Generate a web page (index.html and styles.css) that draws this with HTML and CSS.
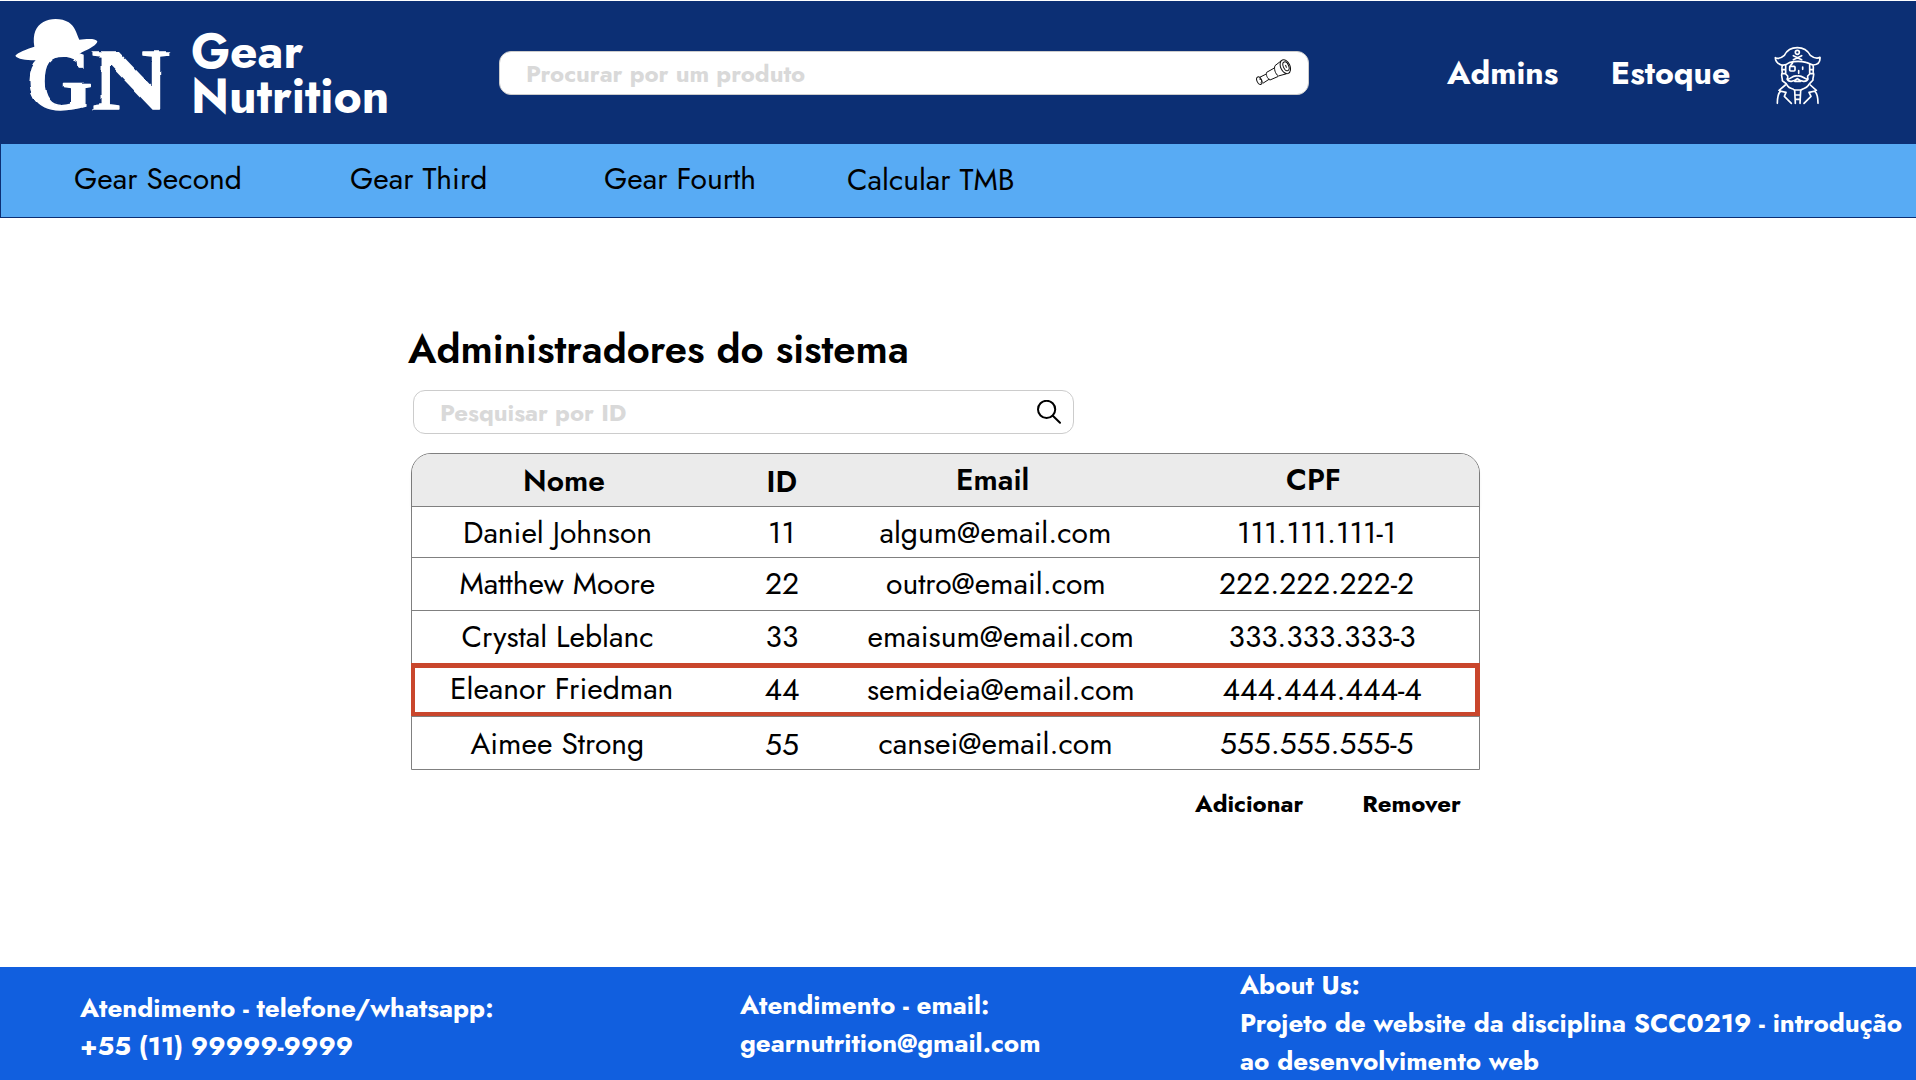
FILE: index.html
```html
<!DOCTYPE html>
<html lang="pt-BR">
<head>
<meta charset="utf-8">
<title>Gear Nutrition - Administradores</title>
<link rel="stylesheet" href="styles.css">
</head>
<body>
<header class="topbar">
  <a class="brand">
    <svg class="brand-mark" viewBox="0 0 510 312" width="170" height="104" fill="#fff">
      <defs>
        <filter id="worn" x="-5%" y="-5%" width="110%" height="110%">
          <feTurbulence type="fractalNoise" baseFrequency="0.03" numOctaves="1" seed="4"/>
          <feDisplacementMap in="SourceGraphic" scale="9" xChannelSelector="R" yChannelSelector="G"/>
        </filter>
      </defs>
      <path d="M22 131C30 121 54 112 79 104C73 66 84 42 106 30C127 17 162 18 182 31C201 43 205 64 214 83C232 82 262 78 268 88C268 98 247 110 222 121C208 130 196 136 178 135C155 134 130 136 110 143C78 147 30 145 22 131Z"/>
      <g filter="url(#worn)" class="brand-letters">
        <text x="54" y="292" textLength="200" lengthAdjust="spacingAndGlyphs">G</text>
        <text x="250" y="291" textLength="236" lengthAdjust="spacingAndGlyphs">N</text>
      </g>
    </svg>
    <span class="brand-name">Gear<br>Nutrition</span>
  </a>
  <div class="search search-products">
    <span>Procurar por um produto</span>
    <svg viewBox="0 0 108 84" width="36" height="28" fill="none" stroke="#111" stroke-width="3" stroke-linecap="round" stroke-linejoin="round">
      <ellipse cx="91" cy="23" rx="14" ry="22" transform="rotate(-24 91 23)"/>
      <ellipse cx="93" cy="22" rx="8" ry="14" transform="rotate(-24 93 22)"/>
      <path d="M78 6L60 20C56 29 61 45 70 51L92 45M58 27L35 40C32 47 37 59 45 63L68 53M32 46L16 54M42 61L25 72M92 19l2 6"/>
      <ellipse cx="13" cy="65" rx="7" ry="12" transform="rotate(-24 13 65)"/>
      <path d="M14 60C20 60 22 68 18 71"/>
    </svg>
  </div>
  <nav class="admin-links">
    <a>Admins</a>
    <a>Estoque</a>
    <svg viewBox="72 48 143 177" width="47.7" height="59" fill="none" stroke="#fff" stroke-width="5" stroke-linecap="round" stroke-linejoin="round">
      <path d="M76 83C84 88 95 83 103 76C112 58 125 53 142 53C160 53 172 60 181 76C190 83 200 88 210 82C211 96 203 104 190 105C182 104 176 98 168 97C150 93 135 93 118 98C110 104 100 107 92 104C82 100 76 92 76 83Z"/>
      <circle cx="142" cy="67" r="6"/>
      <path d="M130 77L155 89M155 77L130 89"/>
      <path d="M97 107C93 116 98 122 96 129C92 138 98 144 97 152C104 156 109 160 113 168C119 177 127 174 133 180H153C160 174 168 176 174 167C179 160 184 156 189 150C187 142 194 136 190 129C188 121 192 114 189 107"/>
      <path d="M107 106V132L113 138V146M179 104V132L173 138V146M97 119H107M97 131H107M179 119H189M179 131H189M128 98L119 110"/>
      <rect x="119" y="109" width="16" height="14" rx="3"/>
      <path d="M158 111V118M146 122V130M111 147C120 151 126 134 142 138C158 134 165 151 174 147C170 157 153 156 142 146C131 156 115 157 111 147ZM134 154H152"/>
      <path d="M82 220C82 202 84 190 92 183L87 181L106 165M90 183L108 187L103 199L124 220M204 220C204 202 201 190 194 183L199 181L181 165M196 183L177 187L183 199L162 220M134 181L136 220M152 181L150 220M135 195H151M135 208H151"/>
    </svg>
  </nav>
</header>
<nav class="categories">
  <a>Gear Second</a>
  <a>Gear Third</a>
  <a>Gear Fourth</a>
  <a class="tmb">Calcular TMB</a>
</nav>
<main class="content">
  <h1>Administradores do sistema</h1>
  <div class="search search-id">
    <span>Pesquisar por ID</span>
    <svg viewBox="0 0 24 24" width="24" height="24" fill="none" stroke="#000" stroke-width="2" stroke-linecap="round">
      <circle cx="9.6" cy="9.4" r="8.6"/>
      <path d="M15.8 15.8L23 22.8"/>
    </svg>
  </div>
  <div class="table">
    <div class="row head"><b>Nome</b><b>ID</b><b>Email</b><b>CPF</b></div>
    <div class="row daniel"><span>Daniel Johnson</span><span>11</span><span>algum@email.com</span><span>111.111.111-1</span></div>
    <div class="row matthew"><span>Matthew Moore</span><span>22</span><span>outro@email.com</span><span>222.222.222-2</span></div>
    <div class="row crystal"><span>Crystal Leblanc</span><span>33</span><span>emaisum@email.com</span><span>333.333.333-3</span></div>
    <div class="row eleanor selected"><span>Eleanor Friedman</span><span>44</span><span>semideia@email.com</span><span>444.444.444-4</span></div>
    <div class="row aimee"><span>Aimee Strong</span><span>55</span><span>cansei@email.com</span><span>555.555.555-5</span></div>
  </div>
  <div class="actions"><a>Adicionar</a><a>Remover</a></div>
</main>
<footer class="footer">
  <p class="phone">Atendimento - telefone/whatsapp:<br>+55 (11) 99999-9999</p>
  <p class="mail">Atendimento - email:<br>gearnutrition@gmail.com</p>
  <p class="about">About Us:<br>Projeto de website da disciplina SCC0219 - introdução<br>ao desenvolvimento web</p>
</footer>
</body>
</html>
```
FILE: styles.css
```css
* { box-sizing: border-box; }

body {
  margin: 0;
  height: 1080px;
  padding-top: 1px;
  display: flex;
  flex-direction: column;
  overflow: hidden;
  background: #fff;
  color: #000;
  font-family: Jost, Lato, sans-serif;
}

/* Top bar */
.topbar {
  height: 143px;
  flex: none;
  display: flex;
  align-items: flex-start;
  background: #0c2f74;
  color: #fff;
}
.brand { display: flex; width: 499px; padding: 11px 0 0 8px; }
.brand-mark { overflow: visible; }
.brand-letters {
  font: bold 260px "Liberation Serif", serif;
  stroke: #fff;
  stroke-width: 4px;
  stroke-linejoin: round;
}
.brand-name {
  margin: 17px 0 0 13px;
  font-size: 48px;
  font-weight: 700;
  line-height: 45px;
}

.search {
  display: flex;
  align-items: center;
  justify-content: space-between;
  height: 44px;
  border: 1px solid #ccc;
  border-radius: 12px;
  background: #fff;
  color: #d9d9d9;
  font-size: 24px;
  font-weight: 700;
}
.search-products { width: 810px; margin-top: 50px; padding: 0 17px 0 26px; }

.admin-links {
  display: flex;
  padding: 49px 0 0 138px;
  font-size: 32px;
  font-weight: 700;
  line-height: 46px;
}
.admin-links a { margin-right: 52.5px; }
.admin-links svg { margin: -4px 0 0 -9px; }

/* Category bar */
.categories {
  height: 74px;
  flex: none;
  display: flex;
  padding: 13px 0 0 73px;
  border-left: 1px solid #0c2f74;
  border-bottom: 1px solid #0c2f74;
  background: #58abf4;
  font-size: 30px;
  line-height: 44px;
}
.categories a { width: 276px; }
.categories a + a { width: 254px; }
.categories a + a + a { width: 243px; }
.categories .tmb { padding-top: 1px; }

/* Administrators */
.content { flex: 1; padding: 102px 0 0 411px; }
h1 {
  margin: 0 0 12px -3px;
  font-size: 40px;
  font-weight: 600;
  line-height: 58px;
}
.search-id { width: 661px; margin-left: 2px; padding: 0 12px 0 26px; }

.table {
  width: 1069px;
  margin-top: 19px;
  border: 1px solid #808080;
  border-radius: 20px 20px 0 0;
  font-size: 30px;
}
.row {
  display: grid;
  grid-template-columns: 294px 154px 274px 1fr;
  align-items: center;
  height: 53px;
  line-height: 44px;
  border-bottom: 1px solid #808080;
}
.row > * { white-space: nowrap; }
.row > :nth-child(1) { padding-left: var(--name); }
.row > :nth-child(2) { padding-left: var(--id); }
.row > :nth-child(3) { padding-left: var(--email); }
.row > :nth-child(4) { padding-left: var(--cpf); }
.head {
  --name: 111px; --id: 60.5px; --email: 96px; --cpf: 152px;
  border-radius: 19px 19px 0 0;
  background: #ebebeb;
  box-shadow: 0 4px 4px -1px rgba(0, 0, 0, .15);
}
.head b { font-weight: 600; }
.head b:nth-child(1) { padding-top: 2px; }
.head b:nth-child(2) { padding-top: 4px; }
.daniel { --name: 51px; --id: 62px; --email: 19.5px; --cpf: 103px; height: 51px; padding-top: 2px; background: #fff; }
.matthew { --name: 47.5px; --id: 59px; --email: 26px; --cpf: 85px; }
.crystal { --name: 49.5px; --id: 59.5px; --email: 7.5px; --cpf: 94.5px; border-bottom: 0; height: 52px; }
.eleanor { --name: 38px; --id: 58.5px; --email: 7px; --cpf: 88.5px; }
.aimee { --name: 58.5px; --id: 59px; --email: 18.5px; --cpf: 86px; height: 52px; padding-top: 2px; border-bottom: 0; }
.selected {
  margin: 0 -1px;
  padding-left: 1px;
  height: 54px;
  box-shadow: inset 0 5px #c9462c, inset 4px 0 #c9462c, inset -5px 0 #c9462c, inset 0 -4px #c9462c;
}
.eleanor > :first-child { padding-bottom: 2px; }
.aimee > :nth-child(2) { padding-top: 2px; }

.actions {
  display: flex;
  gap: 59px;
  padding: 16px 0 0 784px;
  font-size: 24px;
  font-weight: 700;
  line-height: 35px;
}

/* Footer */
.footer {
  height: 113px;
  flex: none;
  display: flex;
  background: #115fdf;
  color: #fff;
  font-size: 26px;
  font-weight: 700;
  line-height: 38px;
}
.footer p { margin: 0; }
.phone { width: 740px; padding: 22px 0 0 80px; }
.mail { width: 500px; padding-top: 19px; }
.about { margin-top: -2px; white-space: nowrap; }
.footer .about { margin-top: -1px; }
```
